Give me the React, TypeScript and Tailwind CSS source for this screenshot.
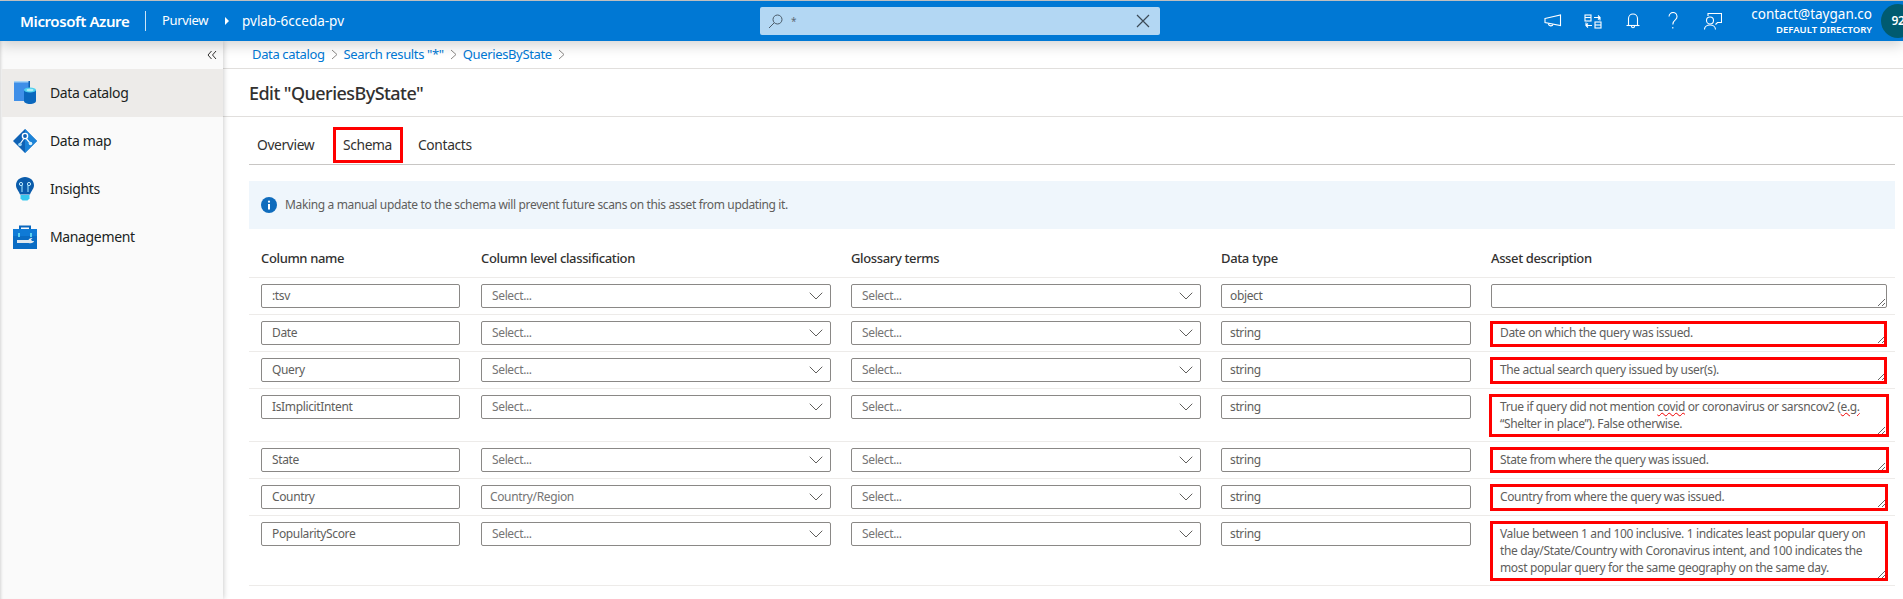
import { ChevronDown } from "lucide-react";
import type { ReactNode } from "react";

const rows: {
  name: string;
  classification: string;
  type: string;
  rowClass: string;
  boxClass: string;
  redClass: string;
  desc: ReactNode;
}[] = [
  { name: ":tsv", classification: "Select...", type: "object", rowClass: "h-[37px]", boxClass: "h-6", redClass: "", desc: "" },
  {
    name: "Date",
    classification: "Select...",
    type: "string",
    rowClass: "h-[37px]",
    boxClass: "h-6",
    redClass: "-left-px right-0 top-0 h-[26px]",
    desc: "Date on which the query was issued.",
  },
  {
    name: "Query",
    classification: "Select...",
    type: "string",
    rowClass: "h-[37px]",
    boxClass: "h-6",
    redClass: "-left-px right-0 -top-px h-[27px]",
    desc: "The actual search query issued by user(s).",
  },
  {
    name: "IsImplicitIntent",
    classification: "Select...",
    type: "string",
    rowClass: "h-[53px]",
    boxClass: "h-[41px]",
    redClass: "-left-[2px] -right-[2px] -top-px h-[43px]",
    desc: (
      <>
        True if query did not mention <span className="underline decoration-wavy decoration-[#e00] decoration-1">covid</span> or coronavirus or sarsncov2 (
        <span className="underline decoration-wavy decoration-[#e00] decoration-1">e.g.</span>
        <br />
        “Shelter in place”). False otherwise.
      </>
    ),
  },
  {
    name: "State",
    classification: "Select...",
    type: "string",
    rowClass: "h-[37px]",
    boxClass: "h-6",
    redClass: "-left-px -right-[2px] -top-px h-[26px]",
    desc: "State from where the query was issued.",
  },
  {
    name: "Country",
    classification: "Country/Region",
    type: "string",
    rowClass: "h-[37px]",
    boxClass: "h-6",
    redClass: "-left-px -right-px -top-px h-[27px]",
    desc: "Country from where the query was issued.",
  },
  {
    name: "PopularityScore",
    classification: "Select...",
    type: "string",
    rowClass: "h-[70px]",
    boxClass: "h-[58px]",
    redClass: "-left-px -right-px -top-px h-[60px]",
    desc: (
      <>
        Value between 1 and 100 inclusive. 1 indicates least popular query on
        <br />
        the day/State/Country with Coronavirus intent, and 100 indicates the
        <br />
        most popular query for the same geography on the same day.
      </>
    ),
  },
];

function CatalogIcon() {
  return (
    <svg width="24" height="24" viewBox="0 0 24 24">
      <rect x="1" y="0" width="16" height="20" fill="#3f8fe8" />
      <rect x="1" y="0" width="16" height="1.5" fill="#a8d4f5" />
      <rect x="15.5" y="0" width="1.5" height="20" fill="#0f5fb0" />
      <path d="M11 9h12v11c0 1.6-2.7 3-6 3s-6-1.4-6-3z" fill="#0a67bd" />
      <ellipse cx="17" cy="9" rx="6" ry="2.6" fill="#50d0ee" />
      <ellipse cx="17" cy="9" rx="3.5" ry="1.3" fill="#a9ecf8" />
    </svg>
  );
}

function MapIcon() {
  return (
    <svg width="24" height="24" viewBox="0 0 24 24">
      <path d="M12 0 24 12 12 24 0 12z" fill="#0f62b5" />
      <path d="M12 0 24 12 12 24z" fill="#1b83d8" />
      <path d="M12 8 7 15M12 8l5 6" stroke="#fff" strokeWidth="1.2" fill="none" />
      <circle cx="12" cy="7" r="2.6" fill="#0f62b5" stroke="#fff" strokeWidth="1.4" />
      <circle cx="7" cy="15.5" r="1.8" fill="#9fd8f6" />
      <circle cx="17.5" cy="14.5" r="1.8" fill="#d6f0fb" />
    </svg>
  );
}

function InsightsIcon() {
  return (
    <svg width="20" height="24" viewBox="0 0 20 24">
      <path d="M10 0c5 0 9 3.6 9 8.2 0 3.6-2.8 5.6-4 9.3H5C3.800 13.800 1 11.800 1 8.200 1 3.600 5 0 10 0z" fill="#0b5cab" />
      <path d="M7 8v7M13 8v7" stroke="#8fd4f4" strokeWidth="1.2" />
      <circle cx="6" cy="7" r="1.6" fill="none" stroke="#bfeafb" strokeWidth="1" />
      <circle cx="14" cy="7" r="1.600" fill="none" stroke="#bfeafb" strokeWidth="1" />
      <path d="M5.500 18h9v3.500l-2 2h-5l-2-2z" fill="#37c8ee" />
    </svg>
  );
}

function ManagementIcon() {
  return (
    <svg width="24" height="24" viewBox="0 0 24 24">
      <path d="M7 5V1.500h10V5" stroke="#0a67bd" strokeWidth="2" fill="none" />
      <rect x="0" y="4" width="24" height="20" fill="#0a6cc4" />
      <rect x="0" y="4" width="24" height="7" fill="#0f7ad6" />
      <rect x="5" y="8" width="2" height="4" fill="#5bd0f0" />
      <rect x="17" y="8" width="2" height="4" fill="#5bd0f0" />
      <path d="M4 15h11.500c.6-1.400 2-2 4-2l-1.500 1.600 1 1.400h2c-.2 1.600-2 2.600-5.500 2H4z" fill="#dfe8ef" />
    </svg>
  );
}

function Megaphone() {
  return (
    <svg width="18" height="14" viewBox="0 0 18 14" fill="none" stroke="#fff" strokeWidth="1.1">
      <path d="M1 4.500 16.500 1v10.500L1 8.500z" />
      <path d="M4.500 9.500c0 3 4 3 4.500.8" />
    </svg>
  );
}

function SwitchIcon() {
  return (
    <svg width="18" height="15" viewBox="0 0 18 15" fill="none" stroke="#fff" strokeWidth="1.1">
      <rect x="1" y="1" width="6" height="6" />
      <path d="M1 3.500h6" />
      <rect x="11" y="8" width="6" height="6" />
      <path d="M11 11h6" />
      <path d="M10 3.500h6v3M14 1.500l2 2-2 2" />
      <path d="M8 11.500H2v-3M4 13.500l-2-2 2-2" />
    </svg>
  );
}

function BellIcon() {
  return (
    <svg width="14" height="16" viewBox="0 0 14 16" fill="none" stroke="#fff" strokeWidth="1.1">
      <path d="M2.500 12V5.500a4.500 4.500 0 0 1 9 0V12" />
      <path d="M.5 12.500h13" />
      <path d="M5.500 13c0 2.400 3 2.400 3 0" />
    </svg>
  );
}

function QuestionIcon() {
  return (
    <svg width="10" height="18" viewBox="0 0 10 18" fill="none" stroke="#fff" strokeWidth="1.1">
      <path d="M1 4.500a4 4 0 1 1 6.500 3.100C6 8.800 4.800 9.800 4.800 12.500" />
      <path d="M4.800 15v1.500" />
    </svg>
  );
}

function FeedbackIcon() {
  return (
    <svg width="18" height="17" viewBox="0 0 18 17" fill="none" stroke="#fff" strokeWidth="1.1">
      <path d="M4 3V.5h13.500v9h-4l-2 2" />
      <circle cx="6" cy="7.500" r="3.500" />
      <path d="M.5 16.500c0-6 11-6 11 0" />
    </svg>
  );
}

const headerIcons = [<Megaphone key="m" />, <SwitchIcon key="s" />, <BellIcon key="b" />, <QuestionIcon key="q" />, <FeedbackIcon key="f" />];

export default function App() {
  return (
    <div className="flex h-[599px] w-[1903px] flex-col overflow-hidden bg-white font-['Noto_Sans',sans-serif] text-[12px] tracking-[-0.36px] text-[#323130]">
      <div className="h-px shrink-0 bg-[#c8c8c8]" />

      <header className="relative z-20 flex h-10 shrink-0 items-center bg-[#0078d4] text-white shadow-[0_4px_14px_rgba(0,0,0,0.18)]">
        <span className="ml-5 w-[125px] text-[15px] font-semibold tracking-[-0.4px]">Microsoft Azure</span>
        <span className="h-5 w-px bg-white/80" />
        <span className="ml-4 w-[63px] text-[13px]">Purview</span>
        <span className="h-0 w-0 border-y-[4px] border-l-[4px] border-y-transparent border-l-white" />
        <span className="ml-[13px] text-[13.5px] tracking-normal">pvlab-6cceda-pv</span>

        <div className="absolute left-[760px] top-[6px] flex h-7 w-[400px] items-center rounded-[2px] bg-[#b3d7f3] pl-2 pr-[10px] text-[#5f6b75]">
          <svg width="15" height="15" viewBox="0 0 15 15" fill="none" stroke="#4a5a68" strokeWidth="1">
            <circle cx="9.500" cy="5.500" r="4.500" />
            <path d="M6.200 8.800 1 14" />
          </svg>
          <span className="ml-2 text-[10px]">*</span>
          <svg className="ml-auto" width="14" height="14" viewBox="0 0 14 14" stroke="#3c4a56" strokeWidth="1.200">
            <path d="M1 1l12 12M13 1 1 13" />
          </svg>
        </div>

        <div className="ml-auto flex items-center">
          <div className="flex w-[200px] items-center">
            {headerIcons.map((icon) => (
              <span key={icon.key} className="flex w-10 justify-center">
                {icon}
              </span>
            ))}
          </div>
          <div className="ml-5 flex w-[119px] flex-col items-end leading-none tracking-normal">
            <span className="whitespace-nowrap text-[13.5px] leading-[18px]">contact@taygan.co</span>
            <span className="whitespace-nowrap text-[9.5px] font-semibold leading-[14px]">DEFAULT DIRECTORY</span>
          </div>
          <div className="-mr-3 ml-[9px] flex h-[34px] w-[34px] items-center justify-center rounded-full bg-[#005b70] text-[12px] font-semibold">
            92
          </div>
        </div>
      </header>

      <div className="flex min-h-0 flex-1">
        <aside className="relative z-10 w-[223px] shrink-0 bg-[#fafafa] shadow-[0_0_6px_rgba(0,0,0,0.25),inset_3px_0_3px_-2px_rgba(0,0,0,0.15)]">
          <div className="flex h-7 items-center justify-end pr-[6px] text-[#323130]">
            <svg width="10" height="10" viewBox="0 0 10 10" fill="none" stroke="#323130" strokeWidth="1">
              <path d="M4.500 1 1 5l3.500 4M9 1 5.500 5 9 9" />
            </svg>
          </div>
          {[
            { label: "Data catalog", icon: <CatalogIcon />, active: true },
            { label: "Data map", icon: <MapIcon />, active: false },
            { label: "Insights", icon: <InsightsIcon />, active: false },
            { label: "Management", icon: <ManagementIcon />, active: false },
          ].map((item) => (
            <div key={item.label} className={`flex h-12 items-center ${item.active ? "ml-[2px] bg-[#edebe9]" : "ml-[2px]"}`}>
              <span className="flex w-[48px] justify-center pr-[2px]">{item.icon}</span>
              <span className="pb-[2px] text-[14px] text-[#201f1e]">{item.label}</span>
            </div>
          ))}
        </aside>

        <main className="min-w-0 flex-1">
          <div className="flex h-7 items-center border-b border-[#e1dfdd] pl-[29px] text-[13px] text-[#0078d4]">
            <span>Data catalog</span>
            <Chevron />
            <span>Search results "*"</span>
            <Chevron />
            <span>QueriesByState</span>
            <Chevron />
          </div>
          <div className="flex h-12 items-center border-b border-[#e1dfdd] pl-[26px] pt-[2px] text-[18px] font-medium tracking-[-0.55px]">
            Edit "QueriesByState"
          </div>

          <div className="ml-[26px] mr-2 flex h-[48px] items-center border-b border-[#c8c6c4] pt-[10px] text-[13.8px]">
            <span className="ml-2 w-[76px]">Overview</span>
            <span className="relative w-[85px] pl-[10px]">
              Schema
              <span className="absolute -top-[8px] left-0 h-9 w-[70px] border-[3px] border-[#f00]" />
            </span>
            <span>Contacts</span>
          </div>

          <div className="ml-[26px] mr-2 mt-4 flex h-12 items-center bg-[#eff6fc] pl-3 text-[12px] text-[#605e5c]">
            <svg width="16" height="16" viewBox="0 0 16 16">
              <circle cx="8" cy="8" r="8" fill="#0f6cbd" />
              <rect x="7" y="7" width="2" height="5.500" fill="#fff" />
              <circle cx="8" cy="4.700" r="1.100" fill="#fff" />
            </svg>
            <span className="ml-2">Making a manual update to the schema will prevent future scans on this asset from updating it.</span>
          </div>

          <div className="ml-[26px] mr-2">
            <div className="grid h-[49px] grid-cols-[220px_370px_370px_270px_1fr] items-center border-b border-[#edebe9] pl-3 pr-2 pt-[12px] text-[13px] font-medium">
              <span>Column name</span>
              <span>Column level classification</span>
              <span>Glossary terms</span>
              <span>Data type</span>
              <span>Asset description</span>
            </div>

            {rows.map((row) => (
              <div key={row.name} className={`grid grid-cols-[220px_370px_370px_270px_1fr] items-start border-b border-[#edebe9] pl-3 pr-2 pt-[6px] ${row.rowClass}`}>
                <div className="flex h-6 w-[199px] items-center rounded-[2px] border border-[#8a8886] px-[10px] text-[#605e5c]">{row.name}</div>
                <SelectBox value={row.classification} />
                <SelectBox value="Select..." />
                <div className="flex h-6 w-[250px] items-center rounded-[2px] border border-[#8a8886] px-[8px] text-[#605e5c]">{row.type}</div>
                <div className="relative">
                  <div className={`resize overflow-hidden rounded-[2px] border border-[#8a8886] px-2 py-[2px] leading-[17px] text-[#605e5c] ${row.boxClass}`}>{row.desc}</div>
                  {row.redClass && <div className={`absolute border-[3px] border-[#f00] ${row.redClass}`} />}
                </div>
              </div>
            ))}
          </div>
        </main>
      </div>
    </div>
  );
}

function Chevron() {
  return (
    <svg className="mx-[6px]" width="7" height="11" viewBox="0 0 7 11" fill="none" stroke="#8a8886" strokeWidth="1">
      <path d="M1 1l5 4.500L1 10" />
    </svg>
  );
}

function SelectBox({ value }: { value: string }) {
  return (
    <div className={`flex h-6 w-[350px] items-center rounded-[2px] border border-[#8a8886] pr-[2px] text-[#757575] ${value === "Select..." ? "pl-[10px]" : "pl-2"}`}>
      <span>{value}</span>
      <ChevronDown className="ml-auto shrink-0 text-[#605e5c]" size={24} strokeWidth={1} />
    </div>
  );
}
